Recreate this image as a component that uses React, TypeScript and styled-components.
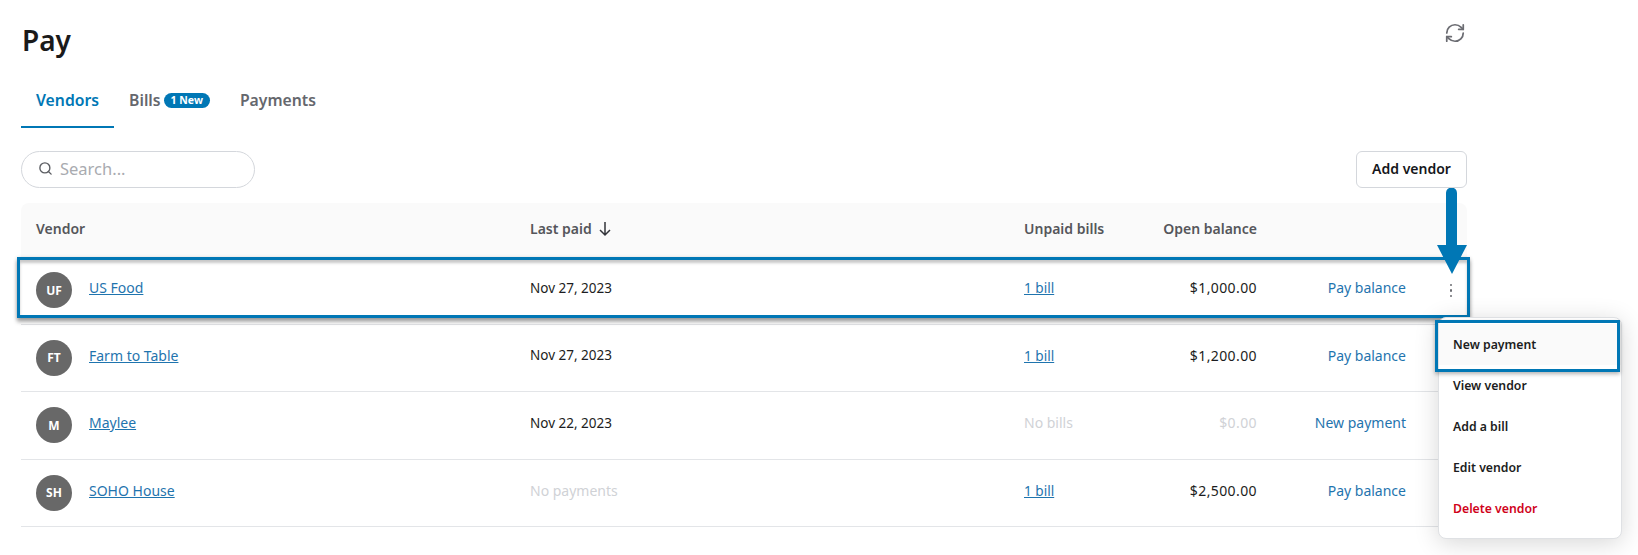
import React from 'react';
import styled, { createGlobalStyle } from 'styled-components';
import { RefreshCw, Search } from 'lucide-react';

const BLUE = '#0077b5';
const LINK = '#1f74ae';
const FONT = '"Noto Sans", "Open Sans", sans-serif';

const GlobalStyle = createGlobalStyle`
    html, body {
        margin: 0;
        padding: 0;
        background: #fff;
        font-family: ${FONT};
    }
`;

const Page = styled.div`
    position: relative;
    width: 1638px;
    height: 555px;
    padding: 0 171px 0 21px;
    box-sizing: border-box;
    overflow: hidden;
`;

const TitleRow = styled.div`
    display: flex;
    justify-content: space-between;
    align-items: flex-start;
    height: 78px;
`;

const Title = styled.h1`
    margin: 20px 0 0 1px;
    font-size: 28px;
    line-height: 40px;
    font-weight: 600;
    color: #1a1a1a;
`;

const RefreshButton = styled.div`
    margin: 22px 1px 0 0;
    color: #6b6c72;
    display: flex;
`;

const Tabs = styled.div`
    display: flex;
    height: 50px;
`;

const Tab = styled.div<{ $active?: boolean }>`
    display: flex;
    align-items: center;
    gap: 3px;
    height: 50px;
    box-sizing: border-box;
    padding: 0 15px 4px;
    font-size: 15.75px;
    font-weight: 600;
    color: ${p => (p.$active ? BLUE : '#65676d')};
    border-bottom: 2px solid ${p => (p.$active ? BLUE : 'transparent')};
`;

const Badge = styled.span`
    background: ${BLUE};
    color: #fff;
    font-size: 10.5px;
    font-weight: 700;
    line-height: 15px;
    height: 15px;
    padding: 0 7px;
    border-radius: 8px;
`;

const Toolbar = styled.div`
    display: flex;
    justify-content: space-between;
    margin-top: 23px;
    height: 37px;
`;

const SearchBox = styled.div`
    width: 234px;
    height: 37px;
    box-sizing: border-box;
    border: 1px solid #d4d7dc;
    border-radius: 19px;
    display: flex;
    align-items: center;
    gap: 7px;
    padding: 0 0 3px 16px;
    color: #5c5e63;
    font-size: 16.5px;
`;

const Placeholder = styled.span`
    color: #a9abb0;
`;

const AddButton = styled.div`
    width: 111px;
    height: 37px;
    box-sizing: border-box;
    border: 1px solid #d4d7dc;
    border-radius: 6px;
    padding-bottom: 2px;
    display: flex;
    align-items: center;
    justify-content: center;
    font-size: 14px;
    font-weight: 600;
    color: #15161a;
`;

const Table = styled.div`
    margin-top: 15px;
`;

const columns = '494px 494px 100px 133px 149px 61px';

const HeadRow = styled.div`
    display: grid;
    grid-template-columns: ${columns};
    align-items: center;
    height: 54px;
    box-sizing: border-box;
    padding: 0 0 4px 15px;
    background: #fafafa;
    border-radius: 8px 8px 0 0;
    font-size: 14px;
    font-weight: 600;
    color: #55565b;
`;

const Row = styled.div`
    position: relative;
    display: grid;
    grid-template-columns: ${columns};
    align-items: center;
    height: 67.5px;
    box-sizing: border-box;
    padding-left: 15px;
    border-bottom: 1px solid #e3e5e8;
    font-size: 14px;
    color: #1c1d21;
`;

const VendorCell = styled.div`
    display: flex;
    align-items: center;
    gap: 17px;
`;

const Avatar = styled.div`
    width: 36px;
    height: 36px;
    border-radius: 50%;
    background: #686868;
    color: #fff;
    display: flex;
    align-items: center;
    justify-content: center;
    font-size: 12px;
    font-weight: 700;
`;

const TextCell = styled.div`
    margin-bottom: 5.5px;
`;

const VendorLink = styled.span`
    color: ${LINK};
    text-decoration: underline;
    margin-bottom: 5.5px;
`;

const UnderLink = styled.span`
    color: ${LINK};
    text-decoration: underline;
    font-size: 13.6px;
`;

const DateCell = styled(TextCell)`
    font-size: 13.5px;
`;

const Muted = styled.span`
    color: #d0d2d6;
    font-size: 14px;
`;

const RightCell = styled(TextCell)`
    text-align: right;
    letter-spacing: 0.4px;
`;

const HeadRight = styled.div`
    text-align: right;
`;

const ActionCell = styled(TextCell)`
    text-align: right;
    color: ${LINK};
`;

const SortArrow = styled.svg`
    margin-left: 6px;
    vertical-align: -3px;
`;

const Dots = styled.div`
    display: flex;
    flex-direction: column;
    align-items: center;
    gap: 3px;
    width: 90px;
`;

const Dot = styled.i`
    width: 2.5px;
    height: 2.5px;
    border-radius: 50%;
    background: #6b6c72;
`;

const Highlight = styled.div`
    position: absolute;
    left: -4px;
    right: -3px;
    top: 0;
    bottom: 6px;
    border: 3px solid ${BLUE};
    box-shadow: 0 4px 4px rgba(0, 0, 0, 0.3), 0 1px 4px rgba(0, 0, 0, 0.2), inset 0 3px 3px rgba(0, 0, 0, 0.22);
    pointer-events: none;
`;

const CallArrow = styled.svg`
    position: absolute;
    left: 1437px;
    top: 188px;
`;

const Menu = styled.div`
    position: absolute;
    left: 1438px;
    top: 317px;
    width: 184px;
    height: 222px;
    box-sizing: border-box;
    padding-top: 6px;
    background: #fff;
    border: 1px solid #dfe1e4;
    border-radius: 8px;
    box-shadow: 0 4px 24px rgba(0, 0, 0, 0.16);
`;

const MenuItem = styled.div<{ $danger?: boolean }>`
    position: relative;
    height: 41px;
    display: flex;
    align-items: center;
    padding-left: 14px;
    font-size: 12.25px;
    font-weight: 600;
    color: ${p => (p.$danger ? '#d0021b' : '#1c1d21')};
`;

const FirstItem = styled(MenuItem)`
    background: #fafafa;
`;

const MenuHighlight = styled.div`
    position: absolute;
    left: -4px;
    right: 1px;
    top: -4px;
    height: 46px;
    box-sizing: content-box;
    border: 3px solid ${BLUE};
    box-shadow: 0 2px 4px rgba(0, 0, 0, 0.3);
    pointer-events: none;
`;

const vendors = [
    { initials: 'UF', name: 'US Food', paid: 'Nov 27, 2023', bills: '1 bill', balance: '$1,000.00', action: 'Pay balance' },
    { initials: 'FT', name: 'Farm to Table', paid: 'Nov 27, 2023', bills: '1 bill', balance: '$1,200.00', action: 'Pay balance' },
    { initials: 'M', name: 'Maylee', paid: 'Nov 22, 2023', bills: '', balance: '$0.00', action: 'New payment' },
    { initials: 'SH', name: 'SOHO House', paid: '', bills: '1 bill', balance: '$2,500.00', action: 'Pay balance' },
];

export default function App() {
    return (
        <Page>
            <GlobalStyle />
            <TitleRow>
                <Title>Pay</Title>
                <RefreshButton>
                    <RefreshCw size={22} strokeWidth={1.9} />
                </RefreshButton>
            </TitleRow>
            <Tabs>
                <Tab $active>Vendors</Tab>
                <Tab>
                    Bills <Badge>1 New</Badge>
                </Tab>
                <Tab>Payments</Tab>
            </Tabs>
            <Toolbar>
                <SearchBox>
                    <Search size={15} strokeWidth={2.2} />
                    <Placeholder>Search...</Placeholder>
                </SearchBox>
                <AddButton>Add vendor</AddButton>
            </Toolbar>
            <Table>
                <HeadRow>
                    <div>Vendor</div>
                    <div>
                        Last paid
                        <SortArrow width="14" height="16" viewBox="0 0 14 16" fill="none" stroke="#33343a" strokeWidth="1.5">
                            <path d="M7 1v13M2 9l5 5 5-5" />
                        </SortArrow>
                    </div>
                    <div>Unpaid bills</div>
                    <HeadRight>Open balance</HeadRight>
                    <div />
                    <div />
                </HeadRow>
                {vendors.map((v, i) => (
                    <Row key={v.name}>
                        <VendorCell>
                            <Avatar>{v.initials}</Avatar>
                            <VendorLink>{v.name}</VendorLink>
                        </VendorCell>
                        <DateCell>{v.paid || <Muted>No payments</Muted>}</DateCell>
                        <TextCell>{v.bills ? <UnderLink>{v.bills}</UnderLink> : <Muted>No bills</Muted>}</TextCell>
                        <RightCell>{v.balance === '$0.00' ? <Muted>{v.balance}</Muted> : v.balance}</RightCell>
                        <ActionCell>{v.action}</ActionCell>
                        {i === 0 ? (
                            <Dots>
                                <Dot />
                                <Dot />
                                <Dot />
                            </Dots>
                        ) : (
                            <div />
                        )}
                        {i === 0 && <Highlight />}
                    </Row>
                ))}
            </Table>
            <CallArrow width="30" height="86" viewBox="0 0 30 86">
                <path d="M9 5a5.5 5.5 0 0 1 11 0v52h10L15 86 0 57h9z" fill={BLUE} />
            </CallArrow>
            <Menu>
                <FirstItem>
                    New payment
                    <MenuHighlight />
                </FirstItem>
                <MenuItem>View vendor</MenuItem>
                <MenuItem>Add a bill</MenuItem>
                <MenuItem>Edit vendor</MenuItem>
                <MenuItem $danger>Delete vendor</MenuItem>
            </Menu>
        </Page>
    );
}
